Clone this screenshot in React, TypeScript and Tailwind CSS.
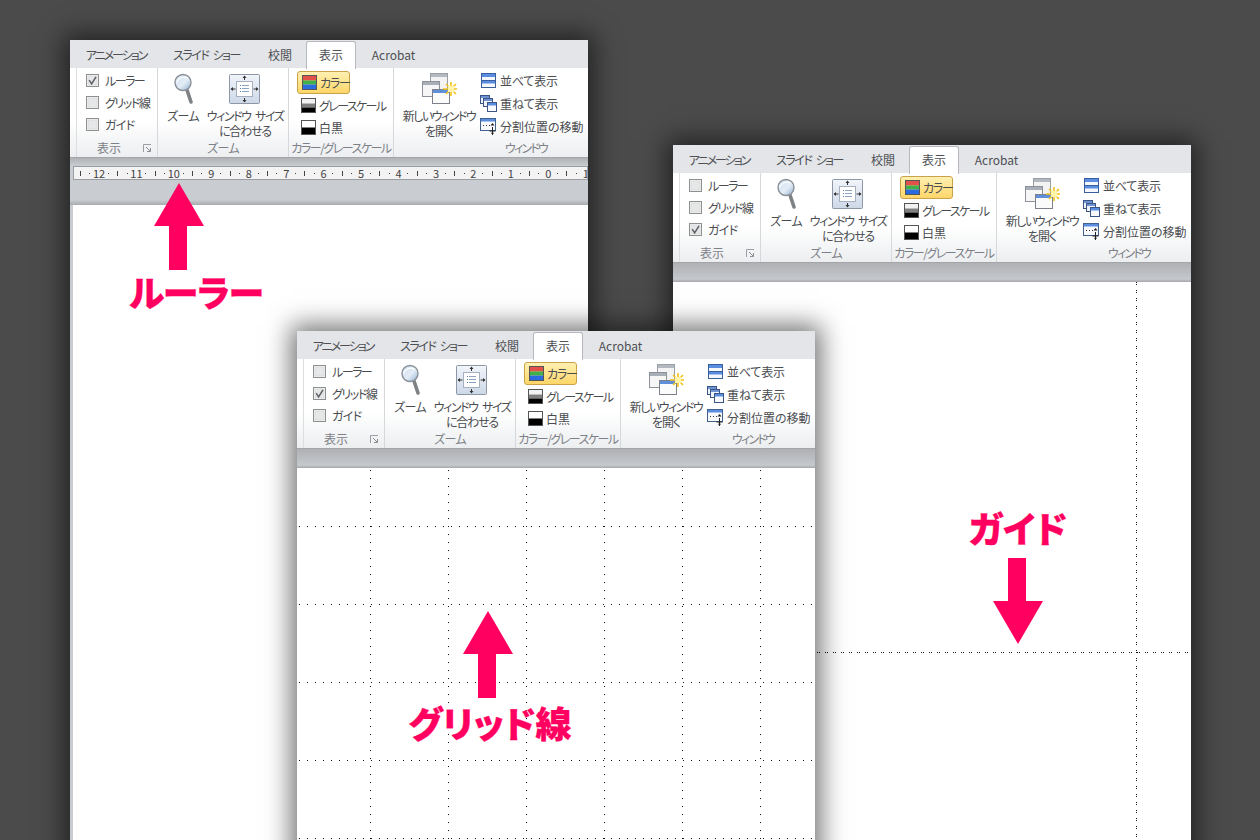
import React from "react";

const FONT = "font-['Noto_Sans_CJK_JP','Liberation_Sans',sans-serif] [font-feature-settings:'palt']";

function Check({ on }: { on: boolean }) {
  return (
    <svg width="13" height="13" viewBox="0 0 13 13" className="shrink-0">
      <rect x="0.5" y="0.5" width="12" height="12" fill="#f4f4f4" stroke="#8e8f8f" />
      <rect x="2" y="2" width="9" height="9" fill="#e6e7e8" stroke="#d2d3d4" strokeWidth="0.6" />
      {on && <path d="M3.2 6.2 L5.6 9.8 L10 2.8" fill="none" stroke="#5c5f63" strokeWidth="1.5" />}
    </svg>
  );
}

function ZoomIcon() {
  return (
    <svg width="24" height="34" viewBox="0 0 24 34">
      <defs>
        <linearGradient id="lens" x1="0" y1="0" x2="1" y2="1">
          <stop offset="0" stopColor="#cfe0f2" />
          <stop offset="0.55" stopColor="#e4edf6" />
          <stop offset="1" stopColor="#8fb0d2" />
        </linearGradient>
      </defs>
      <path d="M16 18 L20 30" stroke="#7f8285" strokeWidth="3.6" strokeLinecap="round" />
      <circle cx="12" cy="10.5" r="8" fill="url(#lens)" stroke="#8a9097" strokeWidth="1.4" />
      <path d="M5.5 10.5 C7 6 12 4 17 6" fill="none" stroke="#ffffff" strokeWidth="1.2" />
    </svg>
  );
}

function FitIcon() {
  return (
    <svg width="32" height="31" viewBox="0 0 32 31">
      <defs>
        <linearGradient id="fitbg" x1="0" y1="0" x2="0" y2="1">
          <stop offset="0" stopColor="#f1f5fb" />
          <stop offset="1" stopColor="#cdd8e7" />
        </linearGradient>
      </defs>
      <rect x="0.5" y="0.5" width="30" height="29" rx="1" fill="url(#fitbg)" stroke="#8d97a6" />
      <rect x="7.5" y="7.5" width="16" height="15" fill="#ffffff" stroke="#a5afbd" />
      <path d="M11 11.5h1M11 14.5h1M11 17.5h1" stroke="#5a7ba8" />
      <path d="M13 11.5h7M13 14.5h7M13 17.5h7" stroke="#8ea4c0" />
      <path d="M15.5 2v4M15.5 24v4M2.5 15h4M24.5 15h4" stroke="#333" />
      <path d="M15.5 1.5l-2 2.5h4zM15.5 28.5l-2-2.5h4zM1.5 15l2.5-2v4zM29.5 15l-2.5-2v4z" fill="#333" />
    </svg>
  );
}

function SwatchIcon({ kind }: { kind: "color" | "gray" | "mono" }) {
  return (
    <svg width="15" height="15" viewBox="0 0 15 15" className="shrink-0">
      {kind === "color" && (
        <>
          <rect x="1" y="1" width="13" height="4.5" fill="#e2504a" />
          <rect x="1" y="5.5" width="13" height="4" fill="#3fb04a" />
          <rect x="1" y="9.5" width="13" height="4.5" fill="#2a6ce0" />
        </>
      )}
      {kind === "gray" && (
        <>
          <rect x="1" y="1" width="13" height="4.5" fill="#f2f2f2" />
          <rect x="1" y="5.5" width="13" height="4" fill="#808080" />
          <rect x="1" y="9.5" width="13" height="4.5" fill="#000000" />
        </>
      )}
      {kind === "mono" && (
        <>
          <rect x="1" y="1" width="13" height="6.5" fill="#ffffff" />
          <rect x="1" y="7.5" width="13" height="6.5" fill="#000000" />
        </>
      )}
      <rect x="0.5" y="0.5" width="14" height="14" fill="none" stroke="#555" />
    </svg>
  );
}

function NewWindowIcon() {
  return (
    <svg width="36" height="33" viewBox="0 0 36 33">
      <rect x="9.5" y="1.5" width="17" height="20" fill="#f3f3f3" stroke="#9a9ea5" />
      <rect x="10" y="2" width="16" height="3" fill="#b3b8c1" />
      <rect x="1.5" y="9.5" width="17" height="15" fill="#f6f6f6" stroke="#8d9199" />
      <rect x="2" y="10" width="16" height="3" fill="#a9afb9" />
      <rect x="11.5" y="17.5" width="17" height="14" fill="#fbfbfb" stroke="#7d828a" />
      <rect x="12" y="18" width="16" height="3" fill="#5f8fd8" />
      <path d="M30 10v5M30 24v-4M22 17h5M36 17h-3M25 12l3 3M35 22l-3-3M25 22l3-3M35 12l-3 3" stroke="#f3c21c" strokeWidth="1.6" />
      <rect x="27" y="14" width="6" height="6" fill="#fff4a8" />
    </svg>
  );
}

function TileIcon() {
  return (
    <svg width="15" height="15" viewBox="0 0 15 15" className="shrink-0">
      <rect x="0.5" y="0.5" width="14" height="14" fill="#f4f7fc" stroke="#3a5f9e" />
      <rect x="1" y="1" width="13" height="3" fill="#5a8de0" />
      <rect x="1" y="7" width="13" height="1" fill="#3a5f9e" />
      <rect x="1" y="8" width="13" height="2.5" fill="#5a8de0" />
    </svg>
  );
}

function CascadeIcon() {
  return (
    <svg width="17" height="17" viewBox="0 0 17 17" className="shrink-0">
      <rect x="0.5" y="0.5" width="9" height="8" fill="#f1f4fa" stroke="#3a5585" />
      <rect x="1" y="1" width="8" height="2" fill="#6f93d2" />
      <rect x="3.5" y="3.5" width="9" height="8" fill="#f1f4fa" stroke="#3a5585" />
      <rect x="4" y="4" width="8" height="2" fill="#6f93d2" />
      <rect x="7.5" y="7.5" width="9" height="9" fill="#f7f9fd" stroke="#3a5585" />
      <rect x="8" y="8" width="8" height="2.5" fill="#5a8de0" />
    </svg>
  );
}

function SplitIcon() {
  return (
    <svg width="17" height="17" viewBox="0 0 17 17" className="shrink-0">
      <rect x="0.5" y="0.5" width="15" height="12" fill="#f7f9fd" stroke="#43618f" />
      <rect x="1" y="1" width="14" height="2.5" fill="#5a8de0" />
      <path d="M3 7.5h1M6 7.5h1M9 7.5h1" stroke="#333" />
      <path d="M12.5 9v8M9.5 13h6" stroke="#222" />
      <path d="M12.5 5l-2 2.5h4zM12.5 16.8l-1.6-2h3.2z" fill="#222" />
    </svg>
  );
}

function Tab({ label, active, className }: { label: string; active?: boolean; className: string }) {
  return (
    <div
      className={`${className} h-[28px] flex items-center justify-center text-[12px] leading-none text-[#4d4f53] whitespace-nowrap ${
        active ? "pb-[2px] bg-white border border-b-0 border-[#b6b9bd] rounded-t-[3px] relative z-10 translate-y-px" : "pt-[1px]"
      }`}
    >
      {label}
    </div>
  );
}

function GroupLabel({ children, launcher, className = "" }: { children: React.ReactNode; launcher?: boolean; className?: string }) {
  return (
    <div className={`relative h-[19px] pt-[1px] flex items-center justify-center text-[12px] leading-none text-[#7d8087] whitespace-nowrap ${className}`}>
      {children}
      {launcher && (
        <svg width="9" height="9" viewBox="0 0 9 9" className="absolute right-[5px] top-[6px]">
          <path d="M0.5 8V0.5H8" fill="none" stroke="#9b9ea3" />
          <path d="M3 3l4 4M7.5 4v3.5H4" fill="none" stroke="#8a8d92" />
        </svg>
      )}
    </div>
  );
}

function Ribbon({ checked }: { checked: "ruler" | "grid" | "guide" }) {
  const checks: [string, "ruler" | "grid" | "guide", string][] = [
    ["ルーラー", "ruler", "tracking-[-1.5px]"],
    ["グリッド線", "grid", "tracking-[-1.4px]"],
    ["ガイド", "guide", "tracking-[-0.7px]"],
  ];
  return (
    <div className={`${FONT} shrink-0`}>
      <div className="h-[28px] bg-[#e3e5e8] border-b border-[#b6b9bd] flex items-end box-content -mb-px">
        <div className="flex pl-[9px]">
          <Tab label="アニメーション" className="w-[74px] tracking-[-2px]" />
          <Tab label="スライド ショー" className="w-[107px] tracking-[-1.5px] [word-spacing:3px]" />
          <Tab label="校閲" className="w-[40px]" />
          <Tab label="表示" className="w-[50px] ml-[6px]" active />
          <Tab label="Acrobat" className="w-[75px]" />
        </div>
      </div>
      <div className="h-[90px] flex bg-gradient-to-b from-white from-60% to-[#eceef0] border-b border-[#a3a5a8] text-[12px] leading-[15px] text-[#4a4c50]">
        <div className="w-[7px] border-r border-[#dcdee0]" />
        <div className="w-[81px] border-r border-[#d6d8db] flex flex-col">
          <div className="h-[70px] pt-[1px] pl-[9px] flex flex-col">
            {checks.map(([label, key, track]) => (
              <div key={key} className="h-[22px] flex items-center gap-[6px] whitespace-nowrap">
                <Check on={key === checked} />
                <span className={track}>{label}</span>
              </div>
            ))}
          </div>
          <GroupLabel launcher className="pr-[16px]">表示</GroupLabel>
        </div>
        <div className="w-[131px] border-r border-[#d6d8db] flex flex-col">
          <div className="h-[70px] flex pt-[4px]">
            <div className="w-[50px] flex flex-col items-center">
              <div className="h-[36px]"><ZoomIcon /></div>
              <span className="tracking-[-0.7px]">ズーム</span>
            </div>
            <div className="w-[76px] -ml-[1px] flex flex-col items-center text-center">
              <div className="h-[36px] pt-[2px]"><FitIcon /></div>
              <span className="whitespace-nowrap tracking-[-1.4px] [word-spacing:3px]">ウィンドウ サイズ</span>
              <span className="tracking-[-1.2px]">に合わせる</span>
            </div>
          </div>
          <GroupLabel className="tracking-[-0.7px]">ズーム</GroupLabel>
        </div>
        <div className="w-[105px] border-r border-[#d6d8db] flex flex-col">
          <div className="h-[70px] pt-[3px] pl-[8px] flex flex-col gap-px">
            <div className="w-[53px] h-[23px] flex items-center gap-[3px] pl-[4px] whitespace-nowrap rounded-[3px] border border-[#c9a24a] bg-gradient-to-b from-[#fff0b0] to-[#fdd668]">
              <SwatchIcon kind="color" />
              <span className="tracking-[-1.2px]">カラー</span>
            </div>
            <div className="h-[21px] flex items-center gap-[3px] pl-[4px] whitespace-nowrap">
              <SwatchIcon kind="gray" />
              <span className="tracking-[-1.6px]">グレースケール</span>
            </div>
            <div className="h-[22px] flex items-center gap-[3px] pl-[4px]">
              <SwatchIcon kind="mono" />
              <span>白黒</span>
            </div>
          </div>
          <GroupLabel className="tracking-[-1.5px]">カラー/グレースケール</GroupLabel>
        </div>
        <div className="flex-1 flex flex-col">
          <div className="h-[70px] flex">
            <div className="w-[76px] ml-[7px] pt-[4px] flex flex-col items-center text-center">
              <div className="h-[36px]"><NewWindowIcon /></div>
              <span className="whitespace-nowrap tracking-[-1.5px]">新しいウィンドウ</span>
              <span className="tracking-[-1px]">を開く</span>
            </div>
            <div className="ml-[3px] pt-[1px] flex flex-col whitespace-nowrap">
              <div className="h-[23px] flex items-center gap-[4px] pl-[1px]"><TileIcon /><span className="tracking-[-0.2px]">並べて表示</span></div>
              <div className="h-[23px] flex items-center gap-[3px]"><CascadeIcon /><span className="tracking-[-0.2px]">重ねて表示</span></div>
              <div className="h-[23px] flex items-center gap-[3px]"><SplitIcon /><span>分割位置の移動</span></div>
            </div>
          </div>
          <GroupLabel className="pl-[70px] tracking-[-1.8px]">ウィンドウ</GroupLabel>
        </div>
      </div>
    </div>
  );
}

function Ruler() {
  const nums = [12, 11, 10, 9, 8, 7, 6, 5, 4, 3, 2, 1, 0, 1];
  const dot = <span className="block w-px h-px bg-[#444]" />;
  const tick = <span className="block w-px h-[5px] bg-[#444]" />;
  const Slot = ({ c }: { c: React.ReactNode }) => (
    <div className="w-[9.36px] shrink-0 flex items-center justify-center">{c}</div>
  );
  return (
    <div className="ml-[3px] h-[14px] bg-[#f3f3f3] border border-[#9a9da1] flex items-center overflow-hidden pl-[1.6px] text-[11px] leading-none text-[#3f4145] font-['Noto_Sans_CJK_JP',sans-serif]">
      <Slot c={tick} />
      <Slot c={dot} />
      {nums.map((n, i) => (
        <React.Fragment key={i}>
          <Slot c={<span>{n}</span>} />
          <Slot c={dot} />
          <Slot c={tick} />
          <Slot c={dot} />
        </React.Fragment>
      ))}
    </div>
  );
}

function Arrow({ down, className }: { down?: boolean; className: string }) {
  return (
    <svg width="50" height="87" viewBox="0 0 50 87" className={`absolute ${className}`}>
      <polygon
        fill="#ff0060"
        points={
          down
            ? "15,0 33,0 33,43 50,43 25,86 0,43 15,43"
            : "25,0 50,43 33,43 33,87 15,87 15,43 0,43"
        }
      />
    </svg>
  );
}

function BigLabel({ children, className }: { children: React.ReactNode; className: string }) {
  return (
    <div
      className={`absolute ${FONT} font-black text-[36px] leading-none text-[#ff0060] whitespace-nowrap -translate-x-1/2 [-webkit-text-stroke:0.3px_#ff0060] ${className}`}
    >
      {children}
    </div>
  );
}

const SHADOW = "shadow-[0_0_24px_6px_rgba(0,0,0,0.55)]";
const BAR = "h-[19px] shrink-0 bg-gradient-to-b from-[#afb1b4] via-[#c5c8cc] via-85% to-[#a6a8ab]";

export default function App() {
  const gridX = [73.5, 151.5, 229.5, 307.5, 385.5, 463.5];
  const gridY = [58.5, 136.5, 214.5, 292.5, 370.5];
  return (
    <div className="relative w-[1260px] h-[840px] overflow-hidden bg-[#4b4b4b]">
      {/* ruler window */}
      <div className={`absolute left-[70px] top-[40px] w-[518px] h-[840px] flex flex-col bg-white ${SHADOW}`}>
        <Ribbon checked="ruler" />
        <div className="h-[47px] shrink-0 bg-[#c9ccd0] flex flex-col">
          <div className="h-[8px] shrink-0 bg-gradient-to-b from-[#b0b2b5] to-[#c9ccd0]" />
          <Ruler />
          <div className="flex-1 bg-gradient-to-b from-[#c9ccd0] from-80% to-[#a8abae]" />
        </div>
        <div className="flex-1 border-l-[3px] border-[#c9ccd0] bg-white" />
        <Arrow className="left-[84px] top-[143px]" />
        <BigLabel className="left-[126px] top-[233px] tracking-[-1px]">ルーラー</BigLabel>
      </div>

      {/* guide window */}
      <div className={`absolute left-[673px] top-[145px] w-[518px] h-[720px] flex flex-col bg-white ${SHADOW}`}>
        <Ribbon checked="guide" />
        <div className={BAR} />
        <div className="relative flex-1 bg-white">
          <svg className="absolute inset-0 w-full h-full" shapeRendering="crispEdges">
            <line x1="463.5" y1="0" x2="463.5" y2="600" stroke="#111" strokeDasharray="1 1 1 5" />
            <line x1="0" y1="370.5" x2="518" y2="370.5" stroke="#111" strokeDasharray="1 1 1 5" />
          </svg>
        </div>
        <BigLabel className="left-[345px] top-[364px]">ガイド</BigLabel>
        <Arrow down className="left-[320px] top-[413px]" />
      </div>

      {/* grid window */}
      <div className={`absolute left-[297px] top-[331px] w-[518px] h-[540px] flex flex-col bg-white ${SHADOW}`}>
        <Ribbon checked="grid" />
        <div className={BAR} />
        <div className="relative flex-1 bg-white">
          <svg className="absolute inset-0 w-full h-full" shapeRendering="crispEdges">
            {gridX.map((x) => (
              <line key={x} x1={x} y1="2" x2={x} y2="400" stroke="#111" strokeDasharray="1 7" />
            ))}
            {gridY.map((y) => (
              <line key={y} x1="2" y1={y} x2="518" y2={y} stroke="#111" strokeDasharray="1 7" />
            ))}
          </svg>
        </div>
        <Arrow className="left-[166px] top-[280px]" />
        <BigLabel className="left-[193px] top-[373px]">グリッド線</BigLabel>
      </div>
    </div>
  );
}
